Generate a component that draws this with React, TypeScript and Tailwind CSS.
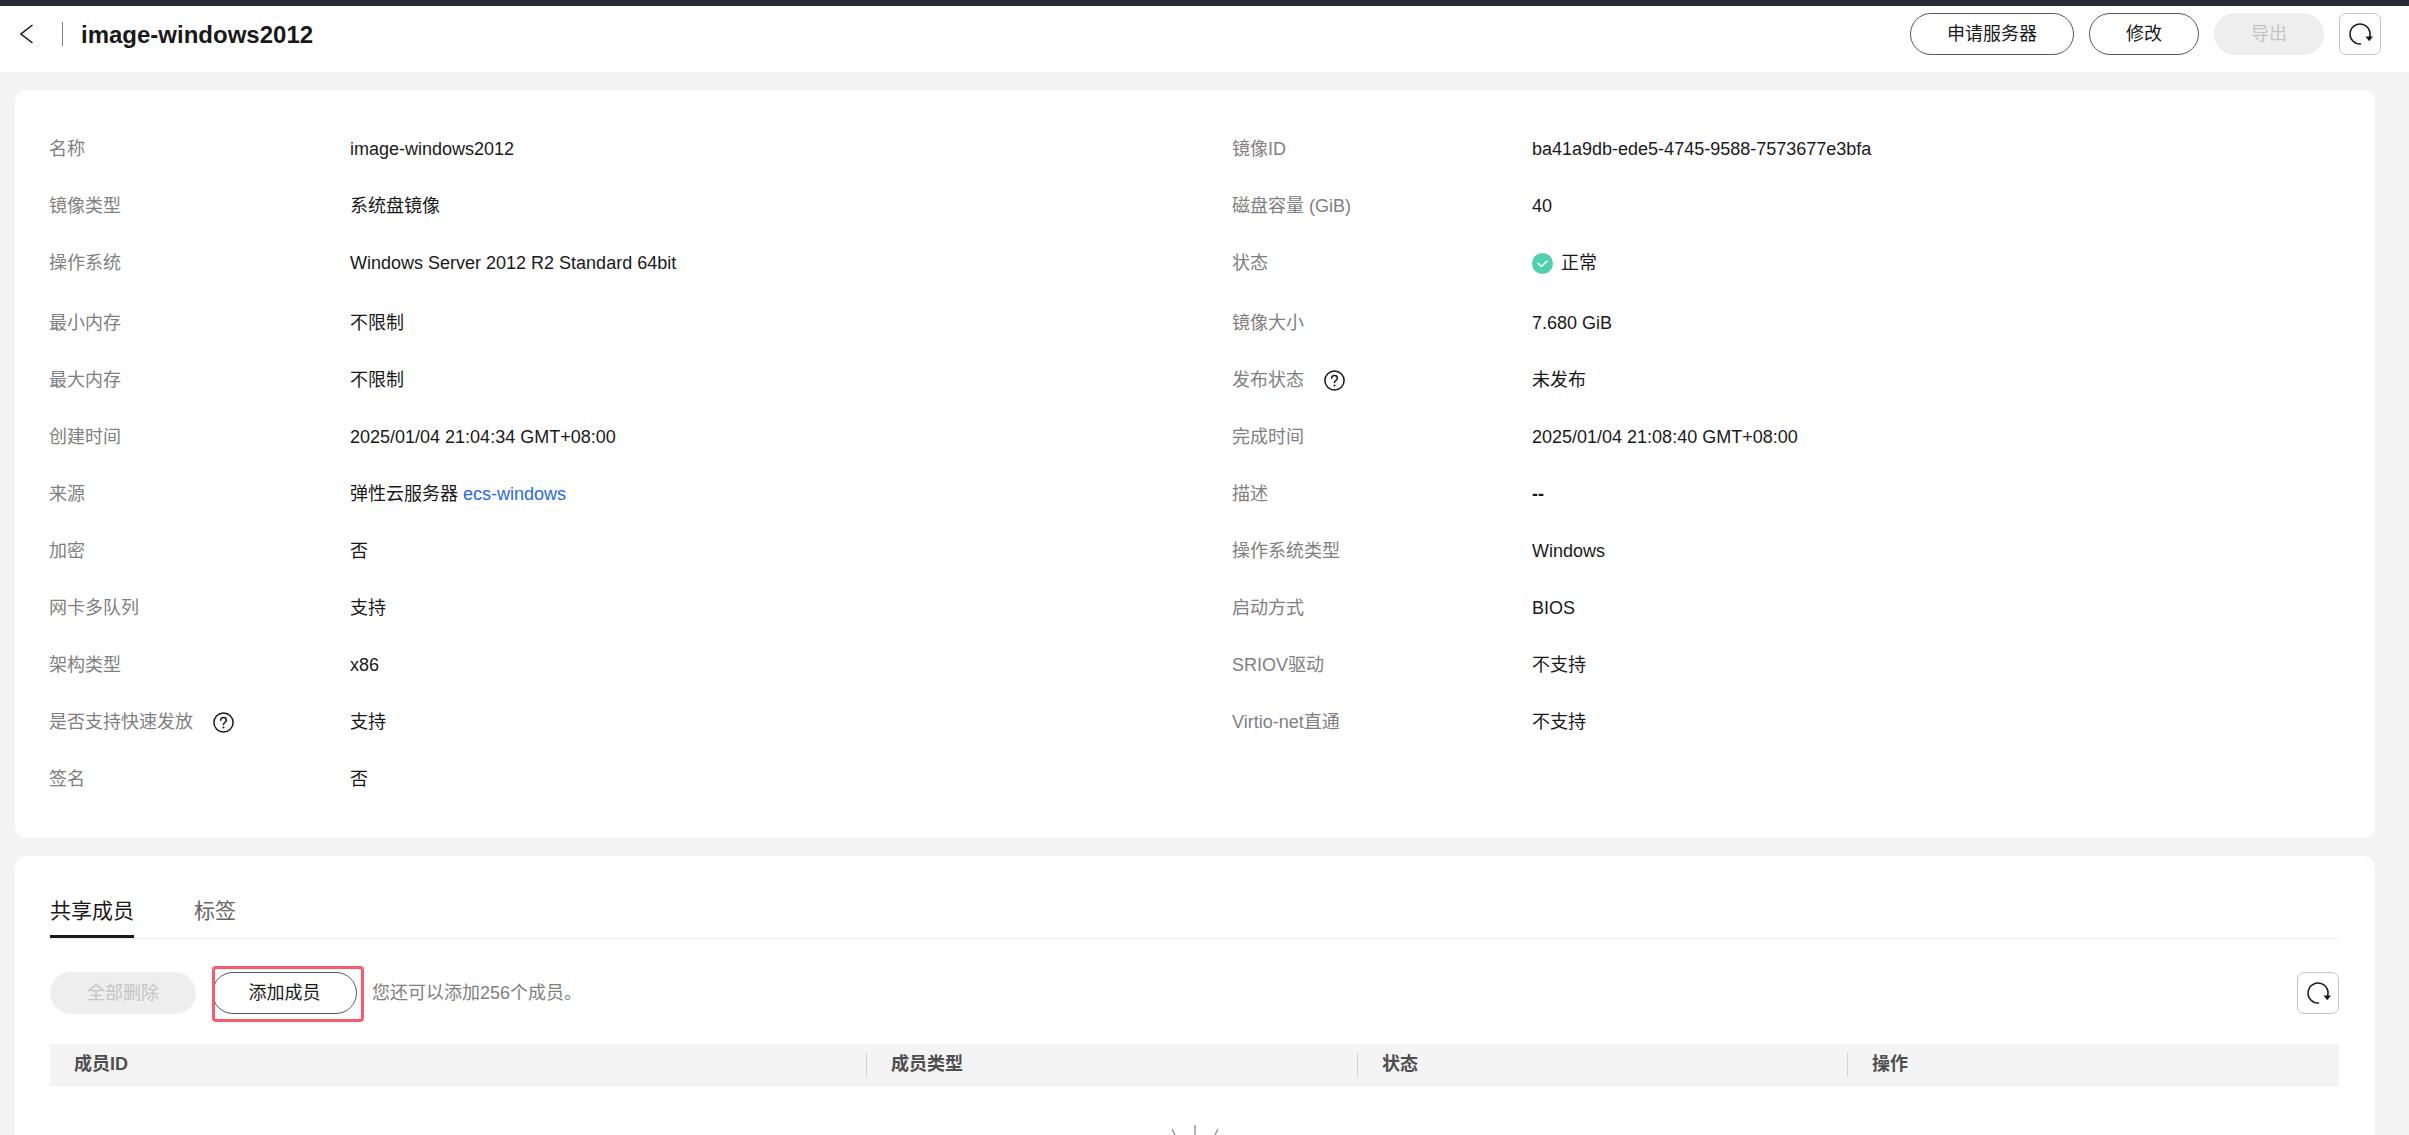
import type { ReactNode } from 'react';

function HelpIcon() {
	return (
		<svg width="21" height="21" viewBox="0 0 21 21" fill="none" className="ml-5 shrink-0">
			<circle cx="10.5" cy="10.5" r="9.6" stroke="#191919" strokeWidth="1.5" />
			<path
				d="M7.6 8.3c0-1.7 1.3-2.8 2.9-2.8s2.9 1 2.9 2.6c0 1.3-.8 1.9-1.7 2.5-.8.5-1.2 1-1.2 2"
				stroke="#191919"
				strokeWidth="1.5"
				strokeLinecap="round"
			/>
			<circle cx="10.5" cy="15.4" r="1" fill="#191919" />
		</svg>
	);
}

function StatusIcon() {
	return (
		<svg width="21" height="21" viewBox="0 0 21 21" fill="none" className="mr-2 shrink-0">
			<circle cx="10.5" cy="10.5" r="10.5" fill="#4fd2ab" />
			<path d="M6.2 10.4l3.2 3.1 5.4-5.3" stroke="#ffffff" strokeWidth="1.6" strokeLinecap="round" strokeLinejoin="round" />
		</svg>
	);
}

function RefreshButton() {
	return (
		<button className="flex h-[42px] w-[42px] shrink-0 items-center justify-center rounded-[7px] border border-[#c4c4c4] bg-white">
			<svg width="26" height="26" viewBox="0 0 26 26" fill="none">
				<path
					d="M13.5 23A10 10 0 1 1 22.6 16"
					stroke="#191919"
					strokeWidth="1.5"
					strokeLinecap="round"
				/>
				<path d="M18.5 15.6h7.5l-3.8 4.6z" fill="#191919" />
			</svg>
		</button>
	);
}

function PillButton({
	children,
	width,
	disabled = false,
}: {
	children: ReactNode;
	width: string;
	disabled?: boolean;
}) {
	return (
		<button
			className={`h-[42px] shrink-0 rounded-full text-[18px] leading-[40px] ${width} ${
				disabled
					? 'bg-[#eeeeee] text-[#c4c4c4]'
					: 'border border-[#595959] bg-white text-[#191919]'
			}`}
		>
			{children}
		</button>
	);
}

interface Field {
	label: ReactNode;
	value: ReactNode;
}

const rows: { left: Field; right?: Field; extra?: boolean }[] = [
	{
		left: { label: '名称', value: 'image-windows2012' },
		right: { label: '镜像ID', value: 'ba41a9db-ede5-4745-9588-7573677e3bfa' },
	},
	{
		left: { label: '镜像类型', value: '系统盘镜像' },
		right: { label: '磁盘容量 (GiB)', value: '40' },
	},
	{
		left: { label: '操作系统', value: 'Windows Server 2012 R2 Standard 64bit' },
		right: {
			label: '状态',
			value: (
				<span className="flex items-center">
					<StatusIcon />
					正常
				</span>
			),
		},
	},
	{
		left: { label: '最小内存', value: '不限制' },
		right: { label: '镜像大小', value: '7.680 GiB' },
		extra: true,
	},
	{
		left: { label: '最大内存', value: '不限制' },
		right: {
			label: (
				<span className="flex items-center">
					发布状态
					<HelpIcon />
				</span>
			),
			value: '未发布',
		},
	},
	{
		left: { label: '创建时间', value: '2025/01/04 21:04:34 GMT+08:00' },
		right: { label: '完成时间', value: '2025/01/04 21:08:40 GMT+08:00' },
	},
	{
		left: {
			label: '来源',
			value: (
				<>
					弹性云服务器 <span className="text-[#2468f2]">ecs-windows</span>
				</>
			),
		},
		right: { label: '描述', value: <span className="font-bold">--</span> },
	},
	{
		left: { label: '加密', value: '否' },
		right: { label: '操作系统类型', value: 'Windows' },
	},
	{
		left: { label: '网卡多队列', value: '支持' },
		right: { label: '启动方式', value: 'BIOS' },
	},
	{
		left: { label: '架构类型', value: 'x86' },
		right: { label: 'SRIOV驱动', value: '不支持' },
	},
	{
		left: {
			label: (
				<span className="flex items-center">
					是否支持快速发放
					<HelpIcon />
				</span>
			),
			value: '支持',
		},
		right: { label: 'Virtio-net直通', value: '不支持' },
	},
	{
		left: { label: '签名', value: '否' },
	},
];

const columns = ['成员ID', '成员类型', '状态', '操作'];

export default function App() {
	return (
		<div className="h-[1135px] overflow-hidden bg-[#f4f4f4] font-['Liberation_Sans','Noto_Sans_CJK_SC',sans-serif] text-[18px] leading-[27px] text-[#191919]">
			<div className="h-1.5 bg-[#282b33]" />

			<header className="flex h-[66px] items-center bg-white pb-[10px] pl-5 pr-7">
				<svg width="13" height="20" viewBox="0 0 13 20" fill="none">
					<path d="M12.5 1L1 10l11.5 9" stroke="#191919" strokeWidth="1.5" />
				</svg>
				<div className="ml-[29px] h-6 w-px bg-[#808080]" />
				<h1 className="ml-[18px] text-[24px] font-bold">image-windows2012</h1>
				<div className="ml-auto flex items-center gap-[15px]">
					<PillButton width="w-[164px]">申请服务器</PillButton>
					<PillButton width="w-[110px]">修改</PillButton>
					<PillButton width="w-[110px]" disabled>
						导出
					</PillButton>
					<RefreshButton />
				</div>
			</header>

			<main className="flex w-[2375px] flex-col gap-[18px] pl-[15px] pt-[18px]">
				<section className="rounded-xl bg-white px-[34px] pb-[30px] pt-[31px]">
					{rows.map((row, i) => (
						<div
							key={i}
							className={`grid h-[57px] grid-cols-[301px_882px_300px_1fr] items-center ${row.extra ? 'mt-[3px]' : ''}`}
						>
							<div className="text-[#808080]">{row.left.label}</div>
							<div>{row.left.value}</div>
							{row.right && <div className="text-[#808080]">{row.right.label}</div>}
							{row.right && <div>{row.right.value}</div>}
						</div>
					))}
				</section>

				<section className="rounded-t-xl bg-white pl-[35px] pr-[36px] pt-[37px]">
					<div className="flex h-[46px] items-start gap-[60px] border-b border-[#eeeeee] text-[21px] leading-[36px]">
						<div className="h-[45px] w-[84px] border-b-[3px] border-[#191919]">共享成员</div>
						<div className="text-[#666666]">标签</div>
					</div>

					<div className="relative mt-[33px] flex h-[42px] items-center">
						<PillButton width="w-[146px]" disabled>
							全部删除
						</PillButton>
						<div className="ml-4">
							<PillButton width="w-[145px]">添加成员</PillButton>
						</div>
						<span className="ml-[15px] text-[#808080]">您还可以添加256个成员。</span>
						<div className="ml-auto">
							<RefreshButton />
						</div>
						<div className="absolute left-[162px] top-[-6px] h-[56px] w-[152px] rounded-[4px] border-[3px] border-[#fb5a6e]" />
					</div>

					<div className="mt-[30px] grid h-[42px] grid-cols-[816px_491px_490px_1fr] items-center border-b border-[#eeeeee] bg-[#f4f4f4] font-bold text-[#4f4f4f]">
						{columns.map((col, i) => (
							<div
								key={col}
								className={`flex h-6 items-center ${i === 0 ? 'pl-6' : 'border-l border-[#d4d4d4] pl-6'}`}
							>
								{col}
							</div>
						))}
					</div>

					<div className="flex justify-center pt-[39px]">
						<svg width="50" height="10" viewBox="0 0 50 10" fill="none" stroke="#999999" strokeWidth="1.5">
							<path d="M25 0v10M2 4l3 6M48 4l-3 6" />
						</svg>
					</div>
				</section>
			</main>
		</div>
	);
}
